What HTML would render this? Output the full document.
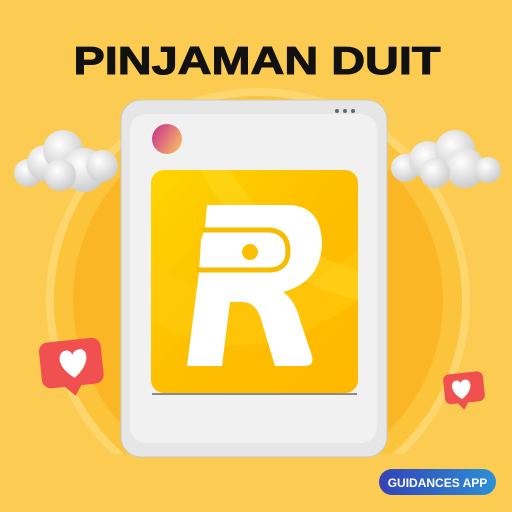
<!DOCTYPE html>
<html><head><style>
html,body{margin:0;padding:0;width:512px;height:512px;overflow:hidden;background:#fccb52;font-family:"Liberation Sans",sans-serif}
</style></head><body>
<svg width="512" height="512" viewBox="0 0 512 512" style="position:absolute;left:0;top:0">
<defs>
<linearGradient id="ig" x1="0" y1="0" x2="1" y2="1"><stop offset="0" stop-color="#ffd500"/><stop offset="0.5" stop-color="#fdbf00"/><stop offset="1" stop-color="#ffb800"/></linearGradient>
<linearGradient id="cam" x1="0" y1="0" x2="1" y2="0.6"><stop offset="0" stop-color="#c72a8d"/><stop offset="1" stop-color="#f5b26a"/></linearGradient>
<linearGradient id="btn" x1="0" y1="0" x2="1" y2="0"><stop offset="0" stop-color="#3343b8"/><stop offset="1" stop-color="#2d8fd6"/></linearGradient>
<radialGradient id="cl" cx="0.4" cy="0.35" r="0.7"><stop offset="0" stop-color="#ffffff"/><stop offset="1" stop-color="#c9c9c9"/></radialGradient>
<clipPath id="cc"><rect x="0" y="0" width="512" height="454"/></clipPath>
</defs>
<g clip-path="url(#cc)">
<circle cx="258" cy="300" r="212" fill="#fdd66e"/>
<circle cx="258" cy="300" r="204" fill="#fcc43a"/>
<circle cx="258" cy="300" r="185" fill="#fbb625"/>
</g>
<rect x="121" y="100" width="266" height="357" rx="20" fill="#e6e6e6" stroke="#c9c9c9"/>
<rect x="130" y="114" width="247" height="329" rx="16" fill="#f1f1f1"/>
<circle cx="337" cy="111" r="2" fill="#666"/><circle cx="345" cy="111" r="2" fill="#666"/><circle cx="353" cy="111" r="2" fill="#666"/>
<circle cx="167" cy="139" r="15" fill="url(#cam)"/>
<rect x="151" y="170" width="207" height="223" rx="13" fill="url(#ig)"/>
<path d="M151 260 Q250 340 358 250 L358 300 Q250 380 151 320Z" fill="#ffcc10" opacity="0.5"/>
<path d="M200 170 Q260 280 358 300 L358 270 Q280 250 230 170Z" fill="#ffe030" opacity="0.35"/>
<line x1="152" y1="394" x2="357" y2="394" stroke="#222" stroke-width="1"/>
<!-- R -->
<path d="M207 205 L290 205 Q322 207 322 245 Q320 282 283 292 Q295 300 300 320 L312 356 Q314 366 305 366 L275 366 L260 316 Q254 302 243 302 L230 302 L222 366 L187 366 L199 272 L201 240 L205 228 Z" fill="#fff"/>
<path d="M203 230 L270 230 Q288 232 288 251 Q288 270 268 270 L197 270" fill="none" stroke="#f7bb00" stroke-width="5"/>
<circle cx="250" cy="252" r="8" fill="#fdc000"/>
<g fill="url(#cl)">
<circle cx="28" cy="173" r="14"/><circle cx="45" cy="163" r="18"/><circle cx="63" cy="150" r="20"/><circle cx="84" cy="170" r="22"/><circle cx="102" cy="166" r="16"/><circle cx="60" cy="175" r="16"/>
<circle cx="405" cy="168" r="14"/><circle cx="428" cy="160" r="19"/><circle cx="455" cy="150" r="20"/><circle cx="465" cy="168" r="20"/><circle cx="488" cy="170" r="13"/><circle cx="435" cy="173" r="15"/>
</g>
<g transform="rotate(-6 72 360)"><rect x="40" y="340" width="62" height="46" rx="9" fill="#f0504f"/><path d="M60 384 L72 396 L80 384Z" fill="#f0504f"/>
<path d="M73 378 C55 365 58 350 67 350 C70 350 72 352 73 355 C74 352 77 350 80 350 C89 350 91 365 73 378Z" fill="#fff"/></g>
<g transform="rotate(-6 462 388)"><rect x="444" y="373" width="40" height="30" rx="6" fill="#f0504f"/><path d="M455 401 L462 410 L468 401Z" fill="#f0504f"/>
<path d="M461 399 C449 391 451 380 457 380 C459 380 460 381 461 383 C462 381 463 380 466 380 C472 380 474 391 461 399Z" fill="#fff"/></g>
<rect x="379" y="469" width="117" height="26" rx="13" fill="url(#btn)"/>
<text x="437.5" y="487" text-anchor="middle" font-family="Liberation Sans" font-weight="bold" font-size="12" fill="#fff">GUIDANCES APP</text>
<text x="257" y="74" text-anchor="middle" font-family="Liberation Sans" font-weight="bold" font-size="39" fill="#111" stroke="#111" stroke-width="1" textLength="367" lengthAdjust="spacingAndGlyphs">PINJAMAN DUIT</text>
</svg>
</body></html>
